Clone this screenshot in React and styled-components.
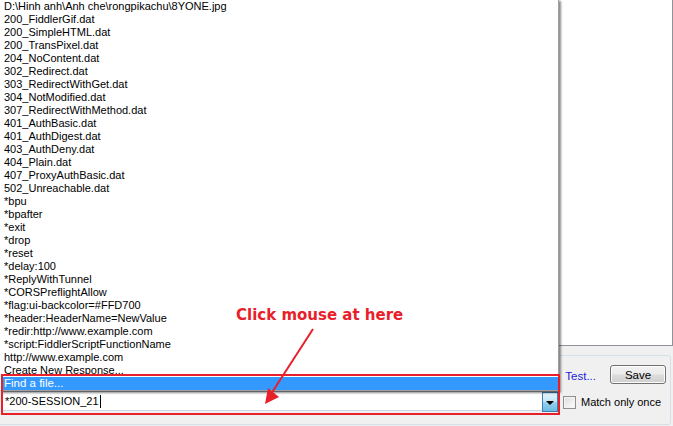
import React from "react";
import styled, { createGlobalStyle } from "styled-components";

const GlobalStyle = createGlobalStyle`
  html, body {
    margin: 0;
    padding: 0;
    background: #f0f0f0;
    overflow: hidden;
  }
  * { box-sizing: border-box; }
`;

const Frame = styled.div`
  position: relative;
  width: 673px;
  height: 426px;
  display: flex;
  flex-direction: column;
  font-family: "Liberation Sans", Arial, sans-serif;
  font-size: 11px;
  color: #000;
  overflow: hidden;
`;

const Editor = styled.div`
  height: 347px;
  margin-top: -1px;
  margin-left: -10px;
  background: #fff;
  border: 1px solid #8f9399;
  flex-shrink: 0;
`;

const Panel = styled.div`
  margin-top: 9px;
  margin-left: -8px;
  margin-right: 2px;
  margin-bottom: 1px;
  flex: 1;
  border: 1px solid #d5dfe5;
  border-radius: 3px;
  padding: 9px 4px 0 8px;
  display: flex;
  flex-direction: column;
  gap: 7px;
`;

const ActionRow = styled.div`
  display: flex;
  justify-content: flex-end;
  align-items: center;
  gap: 14px;
  height: 19px;
`;

const TestLink = styled.span`
  color: #2323d8;
  font-size: 11.5px;
  padding-top: 3px;
`;

const Button = styled.div`
  width: 56px;
  height: 19px;
  border: 1px solid #707070;
  border-radius: 3px;
  background: linear-gradient(#f2f2f2 0%, #ebebeb 48%, #dddddd 52%, #cfcfcf 100%);
  box-shadow: inset 0 0 0 1px #fcfcfc;
  display: flex;
  align-items: center;
  justify-content: center;
  font-size: 11.5px;
`;

const FindRow = styled.div`
  display: flex;
  align-items: center;
  height: 20px;
`;

const ComboWrap = styled.div`
  position: relative;
  width: 557px;
  height: 20px;
  flex-shrink: 0;
`;

const Combo = styled.div`
  height: 20px;
  background: #fff;
  border: 1px solid #abadb3;
  border-bottom-color: #c6d6e6;
  border-left: none;
  display: flex;
  align-items: center;
  padding-left: 4px;
  font-size: 11px;
`;

const Caret = styled.span`
  display: inline-block;
  width: 1px;
  height: 13px;
  background: #000;
  margin-left: 1px;
`;

const ComboButton = styled.div`
  position: absolute;
  right: 0;
  top: 1px;
  width: 16px;
  height: 20px;
  border: 1px solid #3c7fb1;
  background: linear-gradient(#e5f4fc 0%, #c4e5f6 50%, #98d1ef 51%, #6cbbe3 100%);
  display: flex;
  align-items: center;
  justify-content: center;

  &::after {
    content: "";
    border-left: 4px solid transparent;
    border-right: 4px solid transparent;
    border-top: 4px solid #000;
    margin-top: 1px;
  }
`;

const List = styled.div`
  position: absolute;
  left: -1px;
  bottom: 100%;
  width: 559px;
  background: #fff;
  border: 1px solid #a0a0a0;
  border-top-color: transparent;
  border-left-color: transparent;
  box-shadow: 2px 2px 2px rgba(0, 0, 0, 0.45);
  z-index: 2;
`;

const Item = styled.div`
  height: 13px;
  line-height: 13px;
  padding-left: 3px;
  white-space: nowrap;
  background: ${(p) => (p.$active ? "#3399ff" : "transparent")};
  color: ${(p) => (p.$active ? "#fff" : "#000")};
  font-size: ${(p) => (p.$active ? "11.5px" : "11px")};
`;

const Highlight = styled.div`
  position: absolute;
  left: 0;
  top: -17px;
  width: 559px;
  height: 41px;
  border: 2px solid #e8202a;
  z-index: 3;
  pointer-events: none;
`;

const MatchLabel = styled.label`
  display: flex;
  align-items: center;
  gap: 5px;
  margin-left: 5px;
  margin-top: 2px;
  font-size: 11px;
`;

const Check = styled.span`
  width: 13px;
  height: 13px;
  border: 1px solid #8e8f8f;
  background: linear-gradient(135deg, #dcdcdc, #fefefe);
  box-shadow: inset 0 0 0 1px #f4f4f4;
`;

const Note = styled.div`
  position: absolute;
  left: 236px;
  top: 306px;
  font-family: "DejaVu Sans", Verdana, sans-serif;
  font-weight: bold;
  font-size: 15px;
  color: #e8202a;
  z-index: 4;
`;

const Arrow = styled.svg`
  position: absolute;
  left: 0;
  top: 0;
  z-index: 4;
  pointer-events: none;
`;

const items = [
  "D:\\Hinh anh\\Anh che\\rongpikachu\\8YONE.jpg",
  "200_FiddlerGif.dat",
  "200_SimpleHTML.dat",
  "200_TransPixel.dat",
  "204_NoContent.dat",
  "302_Redirect.dat",
  "303_RedirectWithGet.dat",
  "304_NotModified.dat",
  "307_RedirectWithMethod.dat",
  "401_AuthBasic.dat",
  "401_AuthDigest.dat",
  "403_AuthDeny.dat",
  "404_Plain.dat",
  "407_ProxyAuthBasic.dat",
  "502_Unreachable.dat",
  "*bpu",
  "*bpafter",
  "*exit",
  "*drop",
  "*reset",
  "*delay:100",
  "*ReplyWithTunnel",
  "*CORSPreflightAllow",
  "*flag:ui-backcolor=#FFD700",
  "*header:HeaderName=NewValue",
  "*redir:http://www.example.com",
  "*script:FiddlerScriptFunctionName",
  "http://www.example.com",
  "Create New Response...",
  "Find a file...",
];

export default function App() {
  return (
    <>
      <GlobalStyle />
      <Frame>
        <Editor />
        <Panel>
          <ActionRow>
            <TestLink>Test...</TestLink>
            <Button>Save</Button>
          </ActionRow>
          <FindRow>
            <ComboWrap>
              <List>
                {items.map((it, i) => (
                  <Item key={i} $active={i === items.length - 1}>
                    {it}
                  </Item>
                ))}
              </List>
              <Combo>
                *200-SESSION_21
                <Caret />
              </Combo>
              <ComboButton />
              <Highlight />
            </ComboWrap>
            <MatchLabel>
              <Check />
              Match only once
            </MatchLabel>
          </FindRow>
        </Panel>
        <Note>Click mouse at here</Note>
        <Arrow width="673" height="426">
          <line x1="313" y1="329" x2="271" y2="394" stroke="#e8202a" strokeWidth="2" />
          <polygon points="265,404 268,388 279,397" fill="#e8202a" />
        </Arrow>
      </Frame>
    </>
  );
}
